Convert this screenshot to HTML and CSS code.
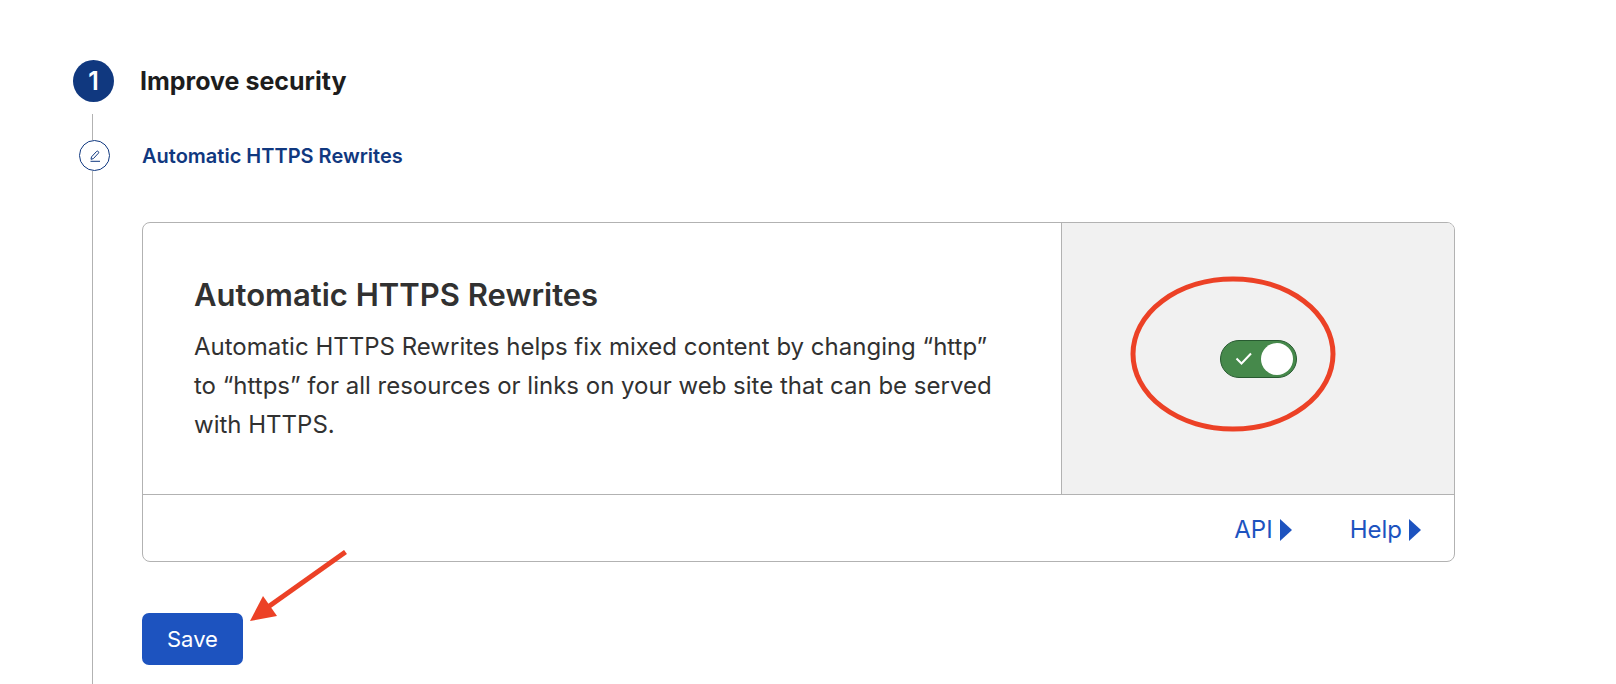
FILE: index.html
```html
<!DOCTYPE html>
<html lang="en">
<head>
<meta charset="utf-8">
<meta name="viewport" content="width=device-width, initial-scale=1">
<title>Improve security</title>
<link rel="stylesheet" href="styles.css">
</head>
<body>
<main class="page">
  <header class="step">
    <span class="step-number">1</span>
    <h1 class="step-title">Improve security</h1>
  </header>
  <div class="step-body">
    <div class="rail">
      <span class="rail-line rail-line-top"></span>
      <span class="rail-marker">
        <svg class="pen" viewBox="0 0 12 12" aria-hidden="true">
          <path d="M2 9.3 2.5 6.9 7.6 1.4Q8.5.7 9.3 1.5T9.4 3.2L4.4 8.6ZM1.5 11.3H11"/>
        </svg>
      </span>
      <span class="rail-line rail-line-rest"></span>
    </div>
    <section class="content">
      <h2 class="substep-title">Automatic HTTPS Rewrites</h2>
      <article class="card">
        <div class="card-main">
          <div class="card-text">
            <h3 class="card-title">Automatic HTTPS Rewrites</h3>
            <p class="card-description">Automatic HTTPS Rewrites helps fix mixed content by changing “http” to “https” for all resources or links on your web site that can be served with HTTPS.</p>
          </div>
          <div class="card-control">
            <label class="toggle">
              <input class="toggle-input" type="checkbox" role="switch" aria-label="Automatic HTTPS Rewrites" checked>
              <svg class="toggle-check" viewBox="0 0 18 14" aria-hidden="true"><path d="M1.5 6.5 6.5 11.5 16 1.5"/></svg>
              <svg class="highlight" viewBox="0 0 206 156" aria-hidden="true"><ellipse cx="103" cy="78" rx="100" ry="75"/></svg>
            </label>
          </div>
        </div>
        <footer class="card-footer">
          <a class="footer-link" href="#api">API<svg class="caret" viewBox="0 0 12 22" aria-hidden="true"><path d="M0 0 12 11 0 22Z"/></svg></a>
          <a class="footer-link" href="#help">Help<svg class="caret" viewBox="0 0 12 22" aria-hidden="true"><path d="M0 0 12 11 0 22Z"/></svg></a>
        </footer>
      </article>
      <div class="actions">
        <button class="save" type="button">Save</button>
        <svg class="arrow" viewBox="0 0 98 72" aria-hidden="true"><path class="arrow-shaft" d="M95.500 2 18 57"/><path class="arrow-head" d="M0 71 13 46 27 66Z"/></svg>
      </div>
    </section>
  </div>
</main>
</body>
</html>
```
FILE: styles.css
```css
* {
  box-sizing: border-box;
}

body {
  margin: 0;
  background: #fff;
  color: #313131;
  font-family: Inter, "Liberation Sans", sans-serif;
}

h1, h2, h3, p {
  margin: 0;
}

.page {
  display: flex;
  flex-direction: column;
  min-height: 100vh;
  padding: 60px 161px 0 73px;
}

.step {
  display: flex;
  align-items: center;
  gap: 26px;
}

.step-number {
  display: flex;
  align-items: center;
  justify-content: center;
  width: 41px;
  height: 42px;
  border-radius: 50%;
  background: #10387f;
  color: #fff;
  font-size: 25px;
  font-weight: 600;
  line-height: 42px;
}

.step-title {
  color: #1d1d1d;
  font-size: 25px;
  font-weight: 700;
  line-height: 42px;
}

.step-body {
  display: grid;
  flex: 1;
  grid-template-columns: 42px 1fr;
  column-gap: 27px;
  padding-top: 12px;
}

.rail {
  display: flex;
  flex-direction: column;
}

.rail-line {
  width: 1px;
  margin-left: 19px;
  background: #b2b2b2;
}

.rail-line-top {
  height: 26px;
}

.rail-line-rest {
  flex: 1;
}

.rail-marker {
  display: flex;
  align-items: center;
  justify-content: center;
  width: 31px;
  height: 31px;
  margin-left: 6px;
  border: 1px solid #10387f;
  border-radius: 50%;
}

.pen {
  width: 12px;
  height: 12px;
  fill: none;
  stroke: #10387f;
}

.content {
  padding: 27px 0 20px;
}

.substep-title {
  color: #10387f;
  font-size: 20px;
  font-weight: 600;
  line-height: 30px;
}

.card {
  margin-top: 51px;
  border: 1px solid #b2b2b2;
  border-radius: 8px;
}

.card-main {
  display: grid;
  grid-template-columns: 7fr 3fr;
  border-bottom: 1px solid #b2b2b2;
}

.card-text {
  padding: 52px 48px 50px 51px;
}

.card-title {
  font-size: 31px;
  font-weight: 600;
  line-height: 40px;
}

.card-description {
  margin-top: 12px;
  font-size: 24px;
  line-height: 39px;
}

.card-control {
  display: flex;
  align-items: center;
  justify-content: center;
  padding-left: 2px;
  border-left: 1px solid #b2b2b2;
  border-top-right-radius: 7px;
  background: #f1f1f1;
}

.toggle {
  display: flex;
  position: relative;
}

.toggle-input {
  display: flex;
  align-items: center;
  width: 77px;
  height: 38px;
  margin: 0;
  padding: 0 3px;
  border: 1px solid #285a31;
  border-radius: 19px;
  background: #46894b;
  appearance: none;
}

.toggle-input::before {
  width: 32px;
  height: 32px;
  border-radius: 50%;
  background: #fff;
  content: "";
}

.toggle-input:checked::before {
  margin-left: auto;
}

.toggle-check {
  position: absolute;
  top: 12px;
  left: 15px;
  width: 18px;
  height: 14px;
  fill: none;
  stroke: #fff;
  stroke-width: 2;
}

.toggle-input:not(:checked) + .toggle-check {
  visibility: hidden;
}

.highlight {
  position: absolute;
  top: -64px;
  left: -90px;
  width: 206px;
  height: 156px;
  fill: none;
  pointer-events: none;
  stroke: #ec4126;
  stroke-width: 5;
}

.card-footer {
  display: flex;
  justify-content: flex-end;
  gap: 58px;
  padding: 15px 33px 12px 24px;
}

.footer-link {
  display: flex;
  align-items: center;
  gap: 7px;
  color: #1d53bf;
  font-size: 24px;
  line-height: 39px;
  text-decoration: none;
}

.caret {
  width: 12px;
  height: 22px;
  fill: #1d53bf;
}

.actions {
  display: flex;
  position: relative;
  margin-top: 51px;
}

.save {
  padding: 11px 25px;
  border: 0;
  border-radius: 7px;
  background: #1d53bf;
  color: #fff;
  font: 22px/30px Inter, "Liberation Sans", sans-serif;
}

.arrow {
  position: absolute;
  top: -63px;
  left: 108px;
  width: 98px;
  height: 72px;
}

.arrow-shaft {
  fill: none;
  stroke: #ec4126;
  stroke-width: 5;
}

.arrow-head {
  fill: #ec4126;
}
```
